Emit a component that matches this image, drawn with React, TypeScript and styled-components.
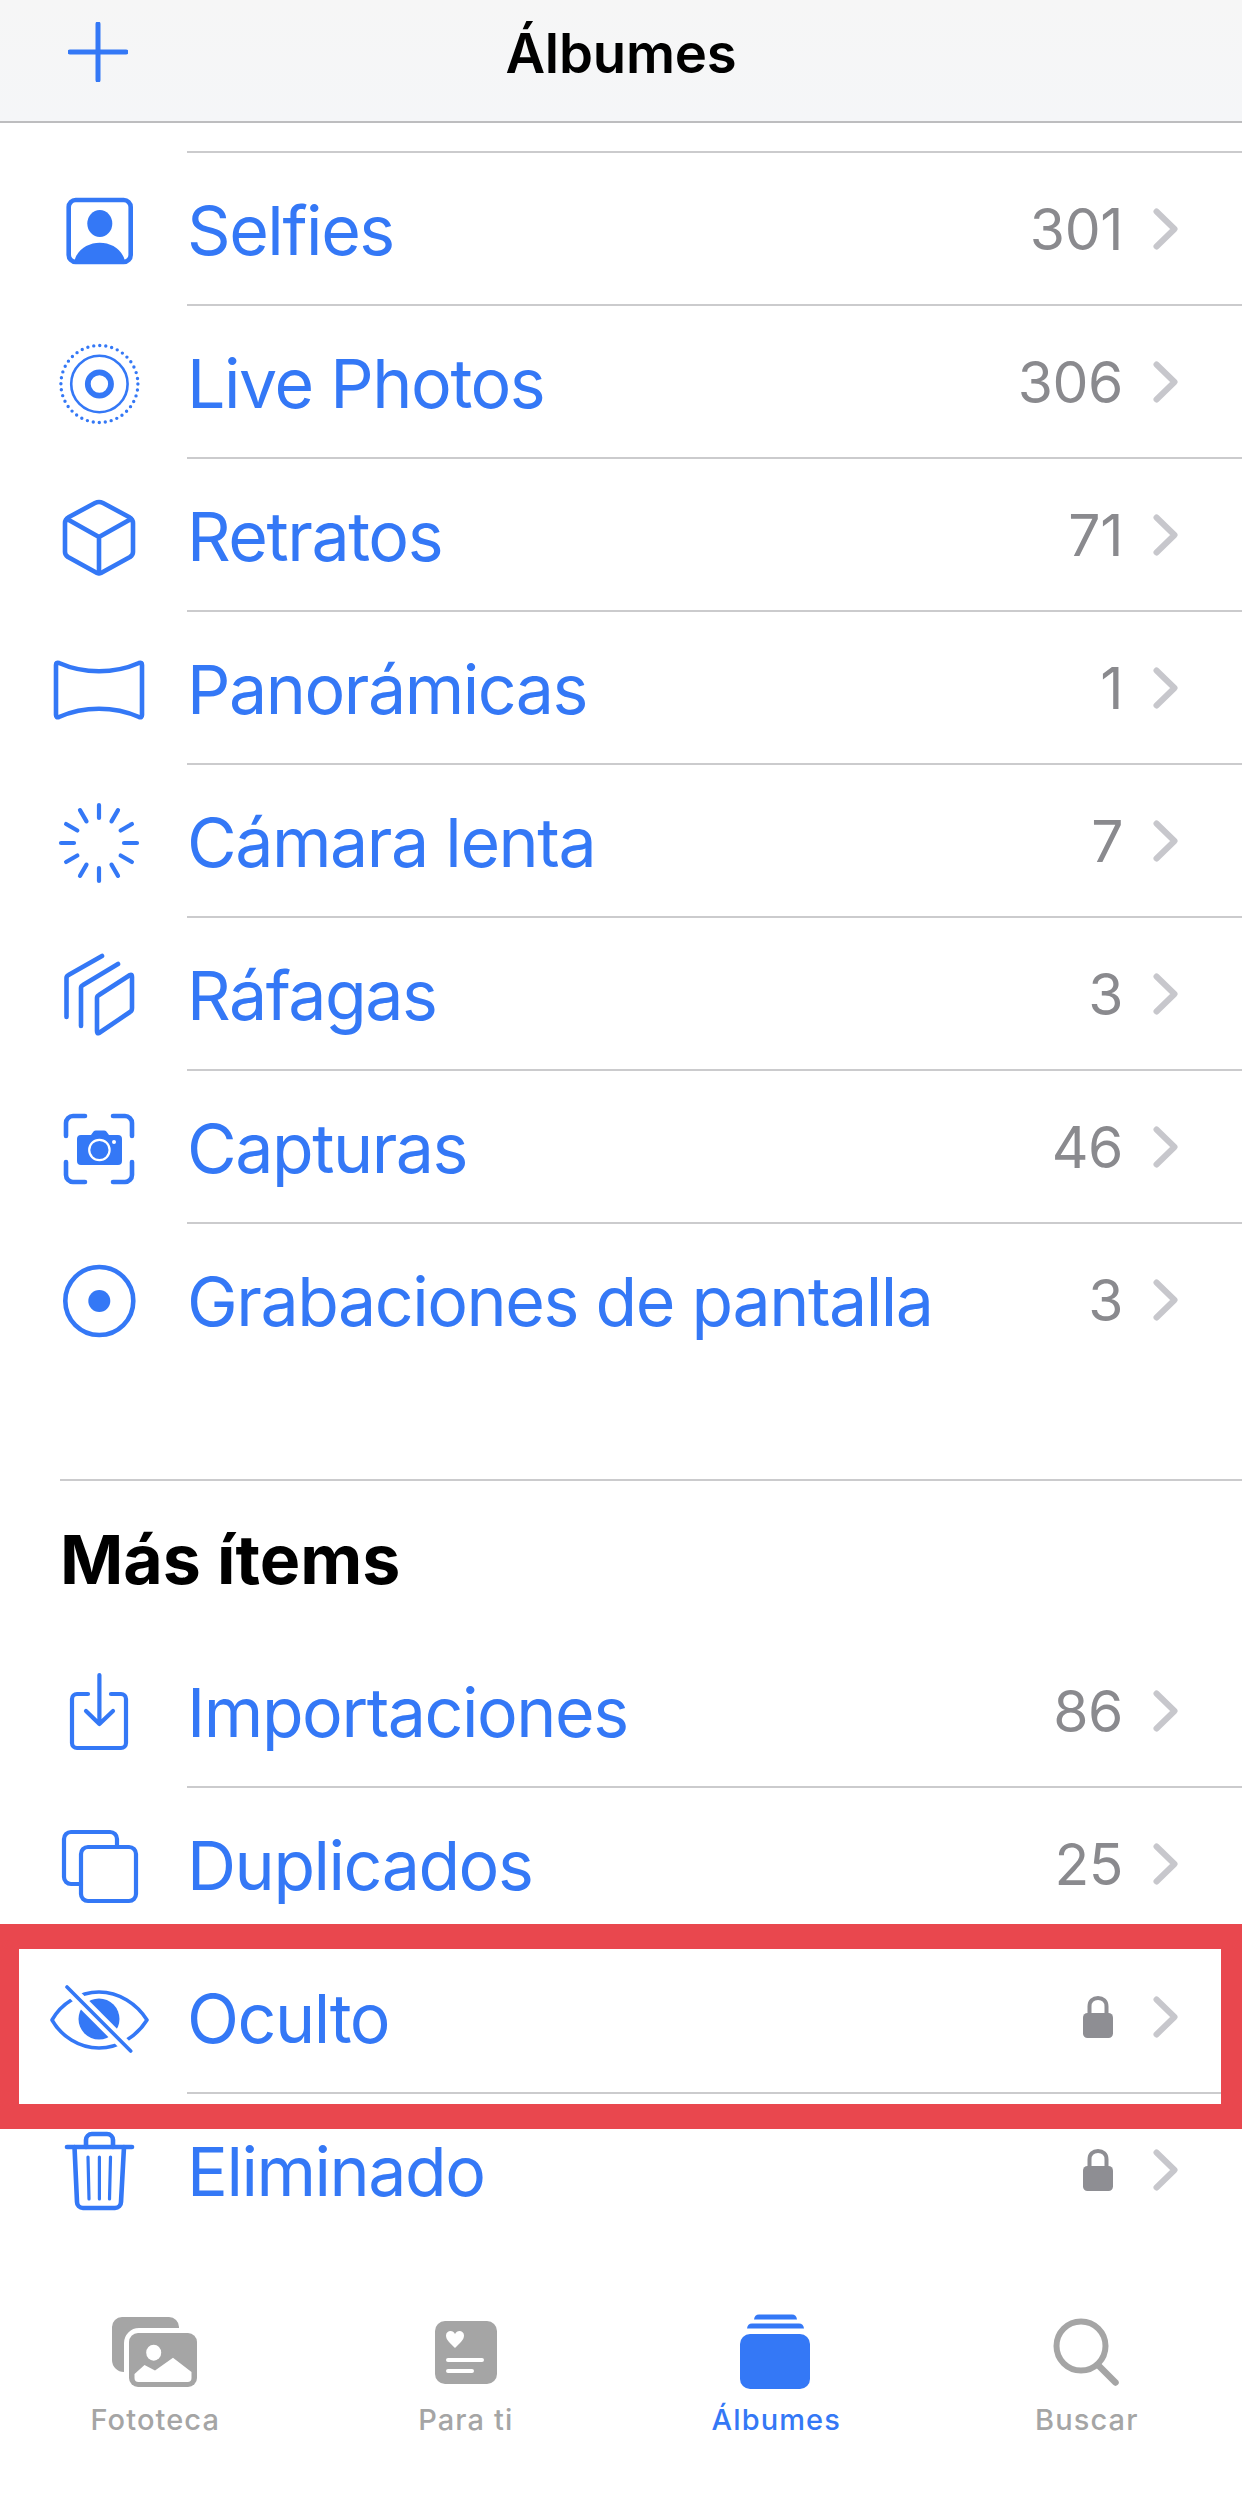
import React from "react";
import styled, { createGlobalStyle } from "styled-components";

const BLUE = "#3478f6";
const TAB_GRAY = "#a5a5a5";
const FONT = `Inter, "Liberation Sans", sans-serif`;

const Global = createGlobalStyle`
  html, body { margin: 0; padding: 0; background: #fff; }
  * { box-sizing: border-box; }
`;

const Page = styled.div`
  position: relative;
  width: 1242px;
  height: 2500px;
  overflow: hidden;
  display: flex;
  flex-direction: column;
  background: #fff;
  font-family: ${FONT};
`;

const NavBar = styled.header`
  flex: none;
  height: 123px;
  display: flex;
  align-items: center;
  justify-content: center;
  position: relative;
  padding-bottom: 15px;
  background: linear-gradient(180deg, #f6f6f6 0%, #f5f6f8 100%);
  border-bottom: 2px solid #bdbdbf;
`;

const NavTitle = styled.h1`
  margin: 0;
  font-size: 54.5px;
  line-height: 64px;
  font-weight: 600;
  letter-spacing: -0.2px;
  color: #000;
`;

const AddButton = styled.svg`
  position: absolute;
  left: 68px;
  top: 22px;
`;

const ClippedEdge = styled.div`
  flex: none;
  height: 30px;
  margin-left: 187px;
  border-bottom: 2px solid #cbcbcd;
`;

const List = styled.section`
  flex: none;
  display: flex;
  flex-direction: column;
`;

const Row = styled.div`
  flex: none;
  height: 153px;
  display: flex;
  align-items: stretch;
`;

const IconCell = styled.div`
  flex: none;
  width: 187px;
  padding-left: 39px;
  display: flex;
  align-items: center;
`;

const RowBody = styled.div<{ $last?: boolean }>`
  flex: 1;
  min-width: 0;
  display: flex;
  align-items: center;
  padding-right: 63px;
  border-bottom: 2px solid ${(p) => (p.$last ? "transparent" : "#cbcbcd")};
`;

const Label = styled.span`
  flex: 1;
  padding-top: 3px;
  font-size: 68px;
  line-height: 80px;
  font-weight: 400;
  letter-spacing: -1.45px;
  color: ${BLUE};
  white-space: nowrap;
`;

const Count = styled.span`
  padding-top: 2px;
  font-size: 57px;
  line-height: 70px;
  font-weight: 400;
  letter-spacing: -0.4px;
  color: #8a8a8e;
`;

const LockSlot = styled.span`
  display: flex;
  margin-right: 9px;
`;

const Chevron = styled.svg`
  flex: none;
  margin-left: 30px;
`;

const SectionHead = styled.div`
  flex: none;
  height: 156px;
  margin: 102px 0 0 60px;
  border-top: 2px solid #cbcbcd;
  display: flex;
  align-items: flex-start;
  padding-top: 38px;
`;

const SectionTitle = styled.h2`
  margin: 0;
  font-size: 68px;
  line-height: 80px;
  font-weight: 700;
  letter-spacing: 0;
  color: #000;
`;

const TabBar = styled.nav`
  margin-top: auto;
  flex: none;
  height: 190px;
  display: grid;
  grid-template-columns: repeat(4, 1fr);
`;

const Tab = styled.div`
  display: flex;
  flex-direction: column;
  align-items: center;
`;

const TabLabel = styled.span<{ $active?: boolean }>`
  margin-top: 8px;
  font-size: 29px;
  line-height: 36px;
  font-weight: 500;
  letter-spacing: 1.1px;
  color: ${(p) => (p.$active ? BLUE : TAB_GRAY)};
`;

const Highlight = styled.div`
  position: absolute;
  left: 0;
  top: 1924px;
  width: 1242px;
  height: 205px;
  border-style: solid;
  border-color: #e9474e;
  border-width: 25px 21px 25px 19px;
`;

const Glyph: React.FC<{ children: React.ReactNode }> = ({ children }) => (
  <svg
    width="120"
    height="120"
    viewBox="0 0 120 120"
    fill="none"
    stroke={BLUE}
    strokeWidth="4.6"
    strokeLinecap="round"
    strokeLinejoin="round"
  >
    {children}
  </svg>
);

const SelfieIcon = () => (
  <Glyph>
    <rect x="29.7" y="30" width="62" height="62" rx="7" />
    <ellipse cx="60.8" cy="53.5" rx="12.5" ry="13.5" fill={BLUE} stroke="none" />
    <path d="M35.5 91C38 79 50 72.7 60.7 72.7C72 72.7 83 79 86 91Z" fill={BLUE} stroke="none" />
  </Glyph>
);

const LiveIcon = () => (
  <Glyph>
    <circle cx="60.4" cy="61" r="38.5" strokeWidth="3.4" strokeDasharray="0 6.05" />
    <circle cx="60.4" cy="61" r="28.2" strokeWidth="2.6" />
    <circle cx="60.4" cy="61" r="11.6" strokeWidth="5.8" />
  </Glyph>
);

const PortraitIcon = () => (
  <Glyph>
    <path d="M56 27Q60 25 64 27L90 41Q94 43.5 94 47V76Q94 79 91 81L62 97Q60 98 58 97L29 81Q26 79 26 76V47Q26 43.5 30 41Z" />
    <path d="M28 43L60 61L92 43M60 61V97" />
  </Glyph>
);

const PanoIcon = () => (
  <Glyph>
    <path d="M20 34C45 45 75 45 100 34Q103 33 103 36V86Q103 89 100 88C75 77 45 77 20 88Q17 89 17 86V36Q17 33 20 34Z" />
  </Glyph>
);

const SloMoIcon = () => (
  <Glyph>
    {Array.from({ length: 12 }, (_, i) => (
      <line key={i} x1="60" y1="23" x2="60" y2="36" transform={`rotate(${i * 30} 60 61)`} strokeWidth="4.2" />
    ))}
  </Glyph>
);

const BurstIcon = () => (
  <Glyph>
    <path d="M60 60L91 40Q93 39 93 42V73Q93 76 91 77L60 98Q58 99 58 96V63Q58 61 60 60Z" />
    <path d="M79 29L44 50Q42 51 42 53V91" />
    <path d="M63 21L29.5 40Q27.5 41 27.5 43V82" />
  </Glyph>
);

const ScreenshotIcon = () => (
  <Glyph>
    <path d="M27 48V35a7 7 0 0 1 7-7H46M74 28H86a7 7 0 0 1 7 7V48M93 74V87a7 7 0 0 1-7 7H74M46 94H34a7 7 0 0 1-7-7V74" />
    <path
      d="M52 47l2.5-3.4a3 3 0 0 1 2.4-1.2H65a3 3 0 0 1 2.4 1.2L70 47h9a4 4 0 0 1 4 4V73a4 4 0 0 1-4 4H42a4 4 0 0 1-4-4V51a4 4 0 0 1 4-4Z"
      fill={BLUE}
      stroke="none"
    />
    <circle cx="60.4" cy="62" r="10.2" fill={BLUE} stroke="#fff" strokeWidth="2.2" />
    <circle cx="75" cy="54" r="2" fill="#fff" stroke="none" />
  </Glyph>
);

const RecordIcon = () => (
  <Glyph>
    <circle cx="60.3" cy="60" r="34" />
    <circle cx="60.3" cy="60" r="11" fill={BLUE} stroke="none" />
  </Glyph>
);

const ImportIcon = () => (
  <Glyph>
    <path d="M49 42H38a5 5 0 0 0-5 5V91a5 5 0 0 0 5 5H82a5 5 0 0 0 5-5V47a5 5 0 0 0-5-5H72" strokeWidth="4.2" />
    <path d="M60.4 23V72M47 59L60.4 72L74 59" strokeWidth="4.2" />
  </Glyph>
);

const DuplicateIcon = () => (
  <Glyph>
    <rect x="42" y="42" width="55" height="54" rx="7" strokeWidth="4.2" />
    <path d="M42 79H32a7 7 0 0 1-7-7V34a7 7 0 0 1 7-7H71a7 7 0 0 1 7 7V42" strokeWidth="4.2" />
  </Glyph>
);

const HiddenIcon = () => (
  <Glyph>
    <path d="M13 62C22 46 40 34 60 34C80 34 98 46 108 62C98 78 80 90 60 90C40 90 22 78 13 62Z" strokeWidth="3.6" />
    <circle cx="60" cy="61" r="20.5" fill={BLUE} stroke="none" />
    <line x1="28" y1="29" x2="91.7" y2="93" stroke="#fff" strokeWidth="12" strokeLinecap="butt" />
    <line x1="28" y1="29" x2="91.7" y2="93" strokeWidth="3.6" />
  </Glyph>
);

const TrashIcon = () => (
  <Glyph>
    <path d="M28 36H93" />
    <path d="M47 36V29a6 6 0 0 1 6-6H68a6 6 0 0 1 6 6V36" />
    <path d="M35.5 36L38 91a6 6 0 0 0 6 6H76a6 6 0 0 0 6-6L85 36" />
    <path d="M49 46L50 88M60.4 46V88M71.5 46L70.5 88" strokeWidth="3.2" />
  </Glyph>
);

const LockIcon = () => (
  <LockSlot>
    <svg width="32" height="44" viewBox="0 0 32 44" fill="none">
      <path d="M7.5 20V11.5C7.5 6 11 3 16 3C21 3 24.5 6 24.5 11.5V20" stroke="#8e8e93" strokeWidth="4" />
      <rect x="1" y="18" width="30" height="25" rx="4.5" fill="#8e8e93" />
    </svg>
  </LockSlot>
);

const ChevronIcon = () => (
  <Chevron width="26" height="42" viewBox="0 0 26 42" fill="none">
    <path d="M3.5 3.5L21.5 21L3.5 38.5" stroke="#c7c7cc" strokeWidth="6" strokeLinecap="round" strokeLinejoin="round" />
  </Chevron>
);

type Item = { label: string; icon: React.ReactNode; count?: string; locked?: boolean };

const media: Item[] = [
  { label: "Selfies", icon: <SelfieIcon />, count: "301" },
  { label: "Live Photos", icon: <LiveIcon />, count: "306" },
  { label: "Retratos", icon: <PortraitIcon />, count: "71" },
  { label: "Panorámicas", icon: <PanoIcon />, count: "1" },
  { label: "Cámara lenta", icon: <SloMoIcon />, count: "7" },
  { label: "Ráfagas", icon: <BurstIcon />, count: "3" },
  { label: "Capturas", icon: <ScreenshotIcon />, count: "46" },
  { label: "Grabaciones de pantalla", icon: <RecordIcon />, count: "3" },
];

const more: Item[] = [
  { label: "Importaciones", icon: <ImportIcon />, count: "86" },
  { label: "Duplicados", icon: <DuplicateIcon />, count: "25" },
  { label: "Oculto", icon: <HiddenIcon />, locked: true },
  { label: "Eliminado", icon: <TrashIcon />, locked: true },
];

const AlbumRows: React.FC<{ items: Item[] }> = ({ items }) => (
  <List>
    {items.map((item, i) => (
      <Row key={item.label}>
        <IconCell>{item.icon}</IconCell>
        <RowBody $last={i === items.length - 1}>
          <Label>{item.label}</Label>
          {item.locked ? <LockIcon /> : <Count>{item.count}</Count>}
          <ChevronIcon />
        </RowBody>
      </Row>
    ))}
  </List>
);

const TabGlyph: React.FC<{ children: React.ReactNode }> = ({ children }) => (
  <svg width="100" height="84" viewBox="0 0 100 84" fill="none">
    {children}
  </svg>
);

const tabs = [
  {
    label: "Fototeca",
    icon: (
      <TabGlyph>
        <path d="M17 7H64a10 10 0 0 1 10 10V18H34a15 15 0 0 0-15 15V62A12 12 0 0 1 7 50V17A10 10 0 0 1 17 7Z" fill={TAB_GRAY} />
        <rect x="24" y="23" width="68" height="54" rx="9" fill={TAB_GRAY} />
        <ellipse cx="48.7" cy="42.7" rx="7.5" ry="8" fill="#fff" />
        <path d="M29.5 68V64L39.5 55L50 60.5L68 47.7L86.5 62V68A4 4 0 0 1 82.5 72H33.5A4 4 0 0 1 29.5 68Z" fill="#fff" />
      </TabGlyph>
    ),
  },
  {
    label: "Para ti",
    icon: (
      <TabGlyph>
        <rect x="19" y="11" width="62" height="63" rx="10" fill={TAB_GRAY} />
        <path d="M39 38C34 33 30 30 30 25.5C30 22.5 32.3 21 34.5 21C36.5 21 38 22 39 24C40 22 41.5 21 43.5 21C45.7 21 48 22.5 48 25.5C48 30 44 33 39 38Z" fill="#fff" />
        <path d="M32 50H66M32 61H56" stroke="#fff" strokeWidth="4" strokeLinecap="round" />
      </TabGlyph>
    ),
  },
  {
    label: "Álbumes",
    active: true,
    icon: (
      <TabGlyph>
        <rect x="14" y="24" width="70" height="55" rx="10" fill={BLUE} />
        <path d="M21 18.5C21.5 15 23 13.5 26 13.5H73C76 13.5 77.5 15 78 18.5Z" fill={BLUE} />
        <path d="M28 9.5C28.5 6 30 4.5 33 4.5H66C69 4.5 70.5 6 71 9.5Z" fill={BLUE} />
      </TabGlyph>
    ),
  },
  {
    label: "Buscar",
    icon: (
      <TabGlyph>
        <circle cx="44" cy="36" r="24.5" stroke={TAB_GRAY} strokeWidth="6" />
        <path d="M61 55L78.5 72.5" stroke={TAB_GRAY} strokeWidth="6.5" strokeLinecap="round" />
      </TabGlyph>
    ),
  },
];

export default function App() {
  return (
    <Page>
      <Global />
      <NavBar>
        <AddButton width="60" height="60" viewBox="0 0 60 60" fill="none">
          <path d="M30 2V58M2 30H58" stroke={BLUE} strokeWidth="5" strokeLinecap="round" />
        </AddButton>
        <NavTitle>Álbumes</NavTitle>
      </NavBar>
      <ClippedEdge />
      <AlbumRows items={media} />
      <SectionHead>
        <SectionTitle>Más ítems</SectionTitle>
      </SectionHead>
      <AlbumRows items={more} />
      <TabBar>
        {tabs.map((t) => (
          <Tab key={t.label}>
            {t.icon}
            <TabLabel $active={t.active}>{t.label}</TabLabel>
          </Tab>
        ))}
      </TabBar>
      <Highlight />
    </Page>
  );
}
